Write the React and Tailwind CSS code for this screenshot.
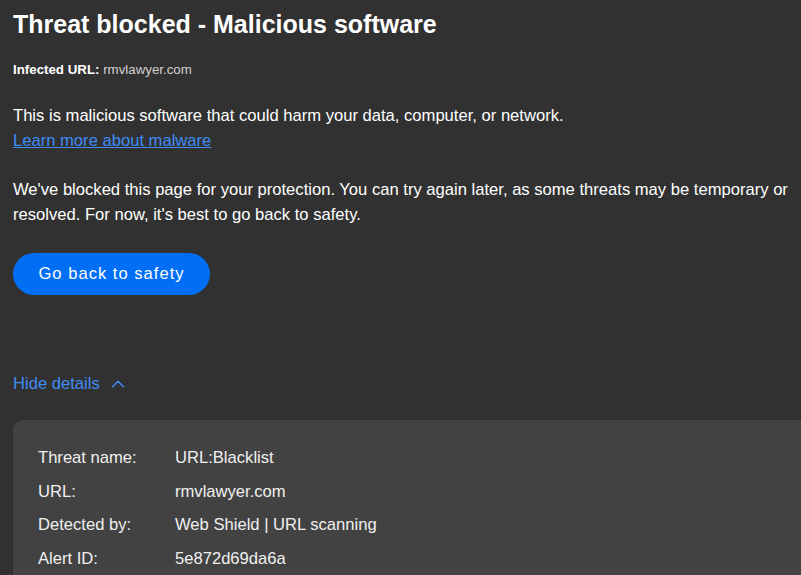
import { ChevronUp } from 'lucide-react'

const DETAILS = [
  { label: 'Threat name:', value: 'URL:Blacklist' },
  { label: 'URL:', value: 'rmvlawyer.com' },
  { label: 'Detected by:', value: 'Web Shield | URL scanning' },
  { label: 'Alert ID:', value: '5e872d69da6a' },
]

export default function App() {
  return (
    <div className="min-h-screen w-full overflow-hidden bg-[#313131] pl-[13px] pt-[8px] font-['Liberation_Sans',Arial,sans-serif] text-white">
      <h1 className="text-[25px] font-bold leading-[33px]">Threat blocked - Malicious software</h1>

      <p className="mt-[21px] text-[13.3px] leading-[16px]">
        <span className="font-bold">Infected URL:</span>{' '}
        <span className="text-[#d0d0d0]">rmvlawyer.com</span>
      </p>

      <div className="mt-[25px] text-[16.6px] leading-[25px]">
        <p>This is malicious software that could harm your data, computer, or network.</p>
        <a href="#" className="text-[#3f8cf5] underline">Learn more about malware</a>
      </div>

      <p className="mt-[24px] pr-[6px] text-[16.6px] leading-[25px]">
        We've blocked this page for your protection. You can try again later, as some threats may be temporary or
        resolved. For now, it's best to go back to safety.
      </p>

      <button className="mt-[26px] h-[42px] w-[197px] rounded-full bg-[#006ef5] text-[16.6px] tracking-[1px] text-white">
        Go back to safety
      </button>

      <button className="mt-[76px] flex items-center gap-[7px] text-[16.6px] leading-[25px] text-[#3f8cf5]">
        Hide details
        <ChevronUp className="h-[22px] w-[22px]" strokeWidth={1.6} />
      </button>

      <div className="mt-[24px] rounded-tl-[10px] bg-[#424242] pl-[25px] pt-[22px]">
        {DETAILS.map((row) => (
          <div key={row.label} className="flex h-[33.5px] items-center text-[16.6px] text-[#f0f0f0]">
            <span className="w-[137px]">{row.label}</span>
            <span>{row.value}</span>
          </div>
        ))}
      </div>
    </div>
  )
}
